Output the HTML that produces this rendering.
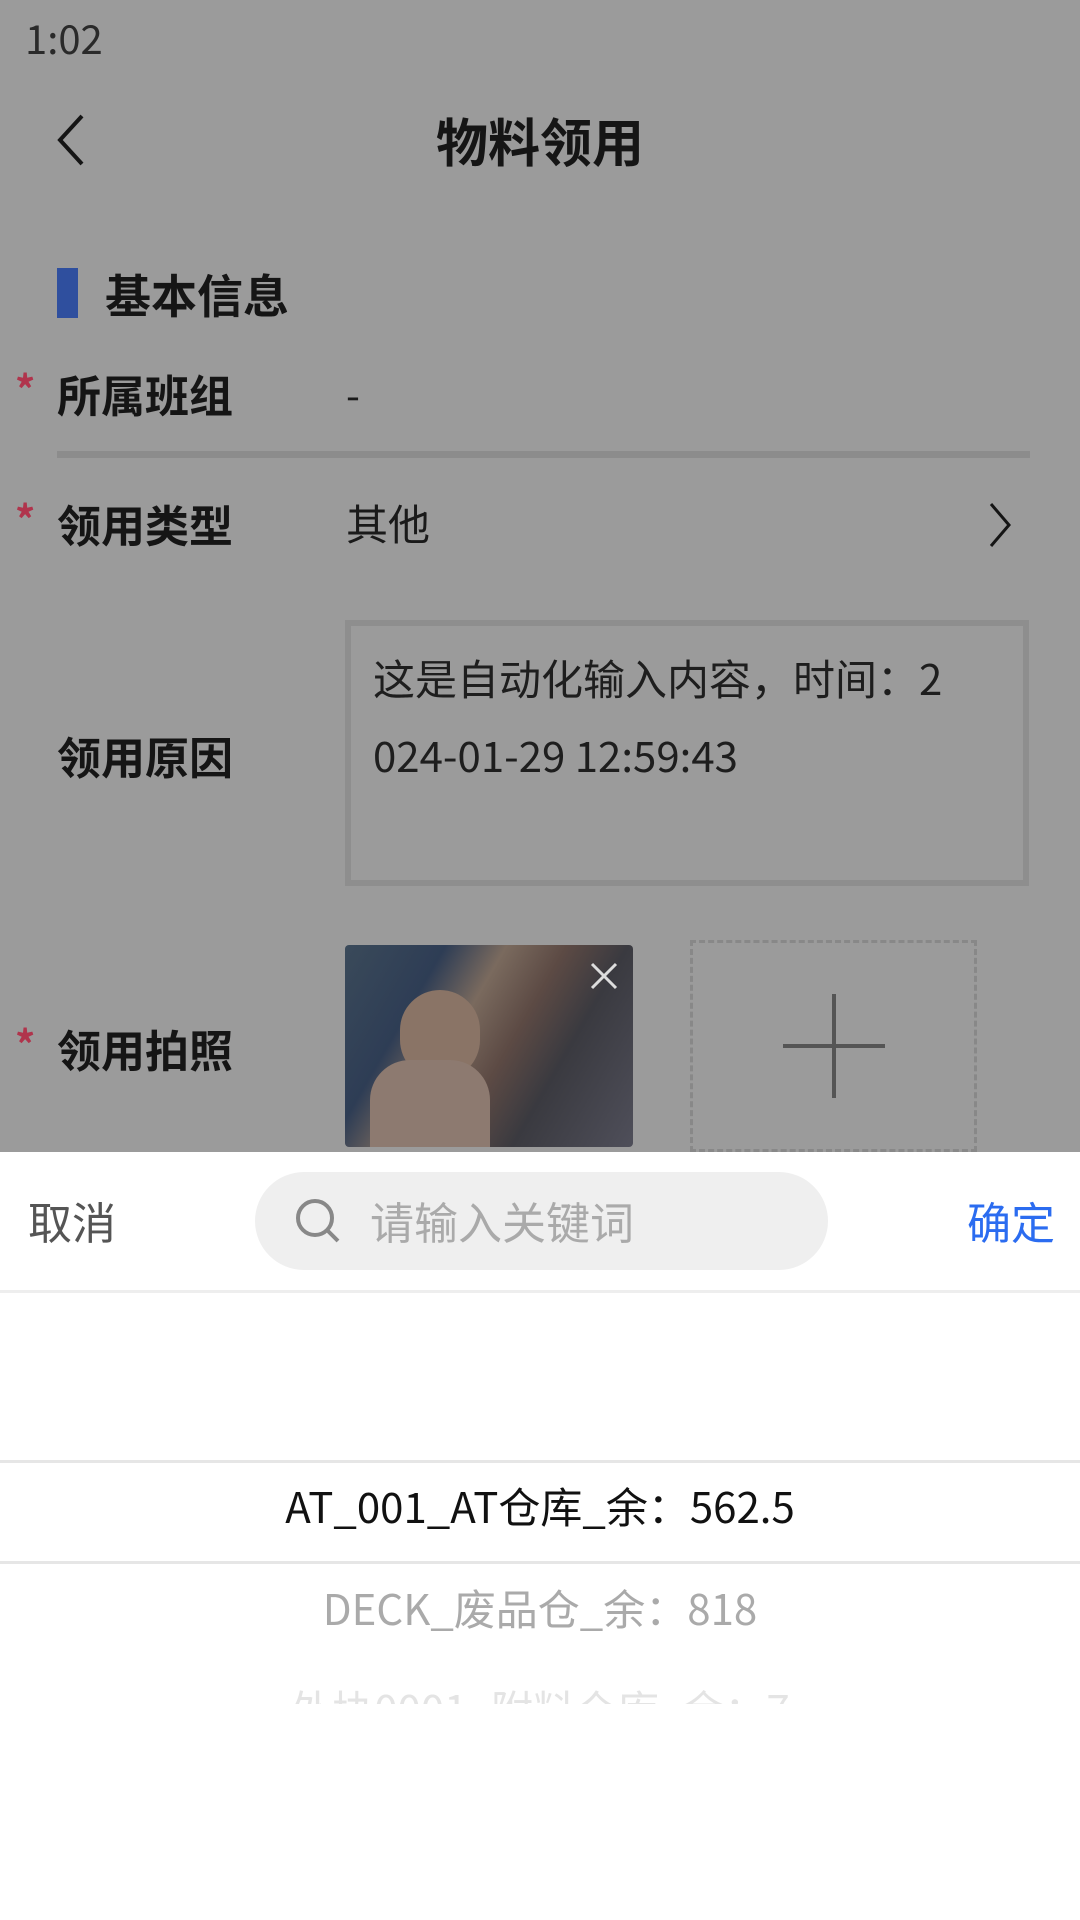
<!DOCTYPE html>
<html><head><meta charset="utf-8"><style>
*{margin:0;padding:0;box-sizing:border-box}
body{width:1080px;height:1920px;position:relative;overflow:hidden;background:#9b9b9b;font-family:"Noto Sans CJK SC","Liberation Sans",sans-serif;color:#1a1a1a}
.a{position:absolute;white-space:nowrap}
.lbl{font-size:44px;font-weight:bold;color:#151515;left:57px;line-height:44px}
.star{color:#b0344c;font-size:40px;left:15px;font-weight:bold;line-height:40px}
</style></head><body>
<div class="a" style="left:25px;top:17px;font-size:40px;line-height:40px;color:#2a2a2a">1:02</div>
<svg class="a" style="left:50px;top:112px" width="40" height="56"><path d="M32 4 L10 28 L32 52" fill="none" stroke="#151515" stroke-width="4"/></svg>
<div class="a" style="left:0;width:1080px;text-align:center;top:114px;font-size:52px;line-height:52px;font-weight:bold;color:#151515">物料领用</div>
<div class="a" style="left:57px;top:268px;width:21px;height:50px;background:#2f4f9e"></div>
<div class="a" style="left:105px;top:271px;font-size:46px;line-height:46px;font-weight:bold;color:#151515">基本信息</div>
<div class="a star" style="top:368px">*</div>
<div class="a lbl" style="top:371px">所属班组</div>
<div class="a" style="left:346px;top:373px;font-size:40px;line-height:40px">-</div>
<div class="a" style="left:57px;top:451px;width:973px;height:7px;background:#8c8c8c"></div>
<div class="a star" style="top:498px">*</div>
<div class="a lbl" style="top:501px">领用类型</div>
<div class="a" style="left:346px;top:502px;font-size:42px;line-height:42px">其他</div>
<svg class="a" style="left:985px;top:500px" width="30" height="50"><path d="M6 4 L24 25 L6 46" fill="none" stroke="#151515" stroke-width="3"/></svg>
<div class="a" style="left:345px;top:620px;width:684px;height:266px;border:6px solid #8e8e8e"></div>
<div class="a" style="left:373px;top:657px;font-size:42px;line-height:42px;color:#1e1e1e">这是自动化输入内容，时间：2</div>
<div class="a" style="left:373px;top:734px;font-size:42px;line-height:42px;color:#1e1e1e">024-01-29 12:59:43</div>
<div class="a lbl" style="top:733px">领用原因</div>
<div class="a star" style="top:1023px">*</div>
<div class="a lbl" style="top:1026px">领用拍照</div>
<div class="a" style="left:345px;top:945px;width:288px;height:202px;border-radius:4px;background:linear-gradient(120deg,#3a4a5a 0%,#2e3d55 25%,#7a6a5e 40%,#5c4a44 55%,#3a3a40 70%,#4f4f5a 100%)"></div>
<div class="a" style="left:400px;top:990px;width:80px;height:90px;border-radius:40px;background:#8a7466"></div>
<div class="a" style="left:370px;top:1060px;width:120px;height:87px;border-radius:40px 40px 0 0;background:#8d7a70"></div>
<svg class="a" style="left:588px;top:960px" width="32" height="32"><path d="M4 4 L28 28 M28 4 L4 28" stroke="#ddd" stroke-width="3"/></svg>
<div class="a" style="left:690px;top:940px;width:287px;height:212px;border:3px dashed #888"></div>
<div class="a" style="left:783px;top:1044px;width:102px;height:4px;background:#555"></div>
<div class="a" style="left:832px;top:994px;width:4px;height:104px;background:#555"></div>
<div class="a" style="left:0;top:1152px;width:1080px;height:768px;background:#fff"></div>
<div class="a" style="left:28px;top:1198px;font-size:44px;line-height:44px;color:#555">取消</div>
<div class="a" style="left:255px;top:1172px;width:573px;height:98px;border-radius:49px;background:#efefef"></div>
<svg class="a" style="left:293px;top:1196px" width="50" height="50"><circle cx="22" cy="22" r="17" fill="none" stroke="#888" stroke-width="4"/><path d="M34 34 L45 45" stroke="#888" stroke-width="4"/></svg>
<div class="a" style="left:370px;top:1198px;font-size:44px;line-height:44px;color:#aaa">请输入关键词</div>
<div class="a" style="left:967px;top:1198px;font-size:44px;line-height:44px;color:#2b6cf0">确定</div>
<div class="a" style="left:0;top:1290px;width:1080px;height:3px;background:#eee"></div>
<div class="a" style="left:0;top:1460px;width:1080px;height:3px;background:#e6e6e6"></div>
<div class="a" style="left:0;top:1561px;width:1080px;height:3px;background:#e6e6e6"></div>
<div class="a" style="left:0;width:1080px;text-align:center;top:1485px;font-size:42px;line-height:42px;color:#111">AT_001_AT仓库_余：562.5</div>
<div class="a" style="left:0;width:1080px;text-align:center;top:1587px;font-size:42px;line-height:42px;color:#aaa">DECK_废品仓_余：818</div>
<div class="a" style="left:0;width:1080px;text-align:center;top:1688px;height:16px;overflow:hidden;font-size:42px;line-height:42px;color:#e4e4e4">外协0001_附料仓库_余：7</div>
</body></html>
